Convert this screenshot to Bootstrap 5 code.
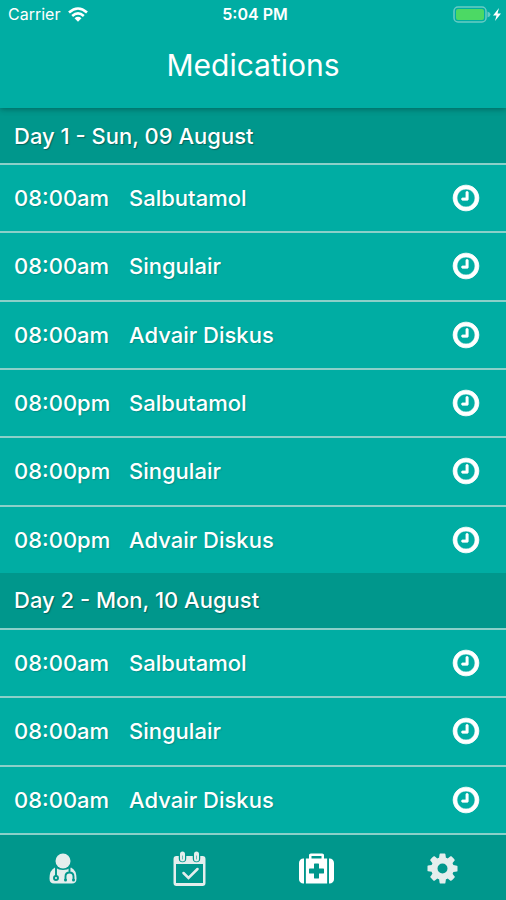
<!DOCTYPE html>
<html lang="en">
<head>
<meta charset="utf-8">
<meta name="viewport" content="width=device-width, initial-scale=1">
<title>Medications</title>
<link href="https://cdn.jsdelivr.net/npm/bootstrap@5.3.0/dist/css/bootstrap.min.css" rel="stylesheet">
<style>
  body { background: #00ada3; color: #fff; font-family: Inter, Roboto, sans-serif; }
  svg { display: block; fill: currentColor; }
  .app-header { position: relative; z-index: 1; background: #00ada3; box-shadow: 0 1px 6px rgba(0, 40, 36, .45); }
  .status-bar { height: 28px; padding: 0 4px 0 8px; font-size: 16px; line-height: 20px; }
  .status-time { font-size: 16px; font-weight: 600; }
  .app-title { height: 80px; padding-bottom: 6px; font-size: 30px; line-height: 36px; font-weight: 400; }
  .day-heading { height: 55px; padding: 0 14px; background: #00978c; font-size: 22px; line-height: 28px; font-weight: 500; text-shadow: 1px 1px 1px rgba(0, 50, 46, .5); }
  .dose { flex: 1 0 68px; padding: 0 25px 0 14px; border-top: 2px solid #8bd0c9; font-size: 22px; line-height: 28px; font-weight: 500; text-shadow: 1px 1px 1px rgba(0, 80, 75, .3); }
  .dose-time { width: 115px; }
  .clock-icon { stroke: currentColor; stroke-width: 50px; }
  .tab-bar { background: #00978c; border-top: 2px solid #8bd0c9; }
  .tab-link { height: 65px; padding-top: 2px; color: #e4eeed; }
  .tab-link.active { color: #fff; }
</style>
</head>
<body>
<svg class="d-none" aria-hidden="true">
  <symbol id="clock" viewBox="0 0 1792 1792"><path d="M1024 544v448q0 14-9 23t-23 9h-320q-14 0-23-9t-9-23v-64q0-14 9-23t23-9h224v-352q0-14 9-23t23-9h64q14 0 23 9t9 23zm416 352q0-148-73-273t-198-198-273-73-273 73-198 198-73 273 73 273 198 198 273 73 273-73 198-198 73-273zm224 0q0 209-103 385.500t-279.500 279.500-385.500 103-385.500-103-279.500-279.500-103-385.500 103-385.500 279.500-279.500 385.500-103 385.500 103 279.500 279.500 103 385.500z"/></symbol>
</svg>
<div class="d-flex flex-column min-vh-100">
  <header class="app-header">
    <div class="status-bar row g-0 align-items-center">
      <div class="col d-flex align-items-center gap-2">
        <span>Carrier</span>
        <svg width="20" height="15" viewBox="0 0 20 15" role="img" aria-label="Wi-Fi"><g fill="none" stroke="currentColor" stroke-width="2.600"><path d="M1 5.500Q10-2.500 19 5.500"/><path d="M4.200 9Q10 3.800 15.800 9"/></g><path d="M6.500 11.200Q10 8.300 13.500 11.200L10 14.800z"/></svg>
      </div>
      <div class="col-auto status-time">5:04 PM</div>
      <div class="col d-flex justify-content-end">
        <svg width="49" height="17" viewBox="0 0 49 17" role="img" aria-label="Battery charging"><rect x="1" y="1" width="32" height="15" rx="4" fill="none" stroke="#68cbc5" stroke-width="1.500"/><rect x="3" y="3" width="28" height="11" rx="2" fill="#4cd964"/><path d="M34.500 5.500q3 1 3 3t-3 3z" fill="#68cbc5"/><path d="M46 2l-6 7.500h3.500L42 15l6-7.500h-3.500z"/></svg>
      </div>
    </div>
    <h1 class="app-title d-flex align-items-center justify-content-center mb-0">Medications</h1>
  </header>
  <main class="d-flex flex-column flex-fill">
    <h2 class="day-heading d-flex align-items-center mb-0">Day 1 - Sun, 09 August</h2>
    <div class="dose d-flex align-items-center"><span class="dose-time">08:00am</span><span class="flex-fill">Salbutamol</span><button class="btn p-0 border-0 text-white" aria-label="Set reminder"><svg class="clock-icon" width="30" height="30"><use href="#clock"/></svg></button></div>
    <div class="dose d-flex align-items-center"><span class="dose-time">08:00am</span><span class="flex-fill">Singulair</span><button class="btn p-0 border-0 text-white" aria-label="Set reminder"><svg class="clock-icon" width="30" height="30"><use href="#clock"/></svg></button></div>
    <div class="dose d-flex align-items-center"><span class="dose-time">08:00am</span><span class="flex-fill">Advair Diskus</span><button class="btn p-0 border-0 text-white" aria-label="Set reminder"><svg class="clock-icon" width="30" height="30"><use href="#clock"/></svg></button></div>
    <div class="dose d-flex align-items-center"><span class="dose-time">08:00pm</span><span class="flex-fill">Salbutamol</span><button class="btn p-0 border-0 text-white" aria-label="Set reminder"><svg class="clock-icon" width="30" height="30"><use href="#clock"/></svg></button></div>
    <div class="dose d-flex align-items-center"><span class="dose-time">08:00pm</span><span class="flex-fill">Singulair</span><button class="btn p-0 border-0 text-white" aria-label="Set reminder"><svg class="clock-icon" width="30" height="30"><use href="#clock"/></svg></button></div>
    <div class="dose d-flex align-items-center"><span class="dose-time">08:00pm</span><span class="flex-fill">Advair Diskus</span><button class="btn p-0 border-0 text-white" aria-label="Set reminder"><svg class="clock-icon" width="30" height="30"><use href="#clock"/></svg></button></div>
    <h2 class="day-heading d-flex align-items-center mb-0">Day 2 - Mon, 10 August</h2>
    <div class="dose d-flex align-items-center"><span class="dose-time">08:00am</span><span class="flex-fill">Salbutamol</span><button class="btn p-0 border-0 text-white" aria-label="Set reminder"><svg class="clock-icon" width="30" height="30"><use href="#clock"/></svg></button></div>
    <div class="dose d-flex align-items-center"><span class="dose-time">08:00am</span><span class="flex-fill">Singulair</span><button class="btn p-0 border-0 text-white" aria-label="Set reminder"><svg class="clock-icon" width="30" height="30"><use href="#clock"/></svg></button></div>
    <div class="dose d-flex align-items-center"><span class="dose-time">08:00am</span><span class="flex-fill">Advair Diskus</span><button class="btn p-0 border-0 text-white" aria-label="Set reminder"><svg class="clock-icon" width="30" height="30"><use href="#clock"/></svg></button></div>
  </main>
  <nav class="tab-bar row g-0" aria-label="Main">
    <a class="tab-link col d-flex align-items-center justify-content-center" href="#doctor" aria-label="Doctor">
      <svg width="28" height="31" viewBox="0 0 28 31"><circle cx="14" cy="8" r="7.500"/><path d="M6 14.500Q14 19.500 22 14.500Q27.500 17 27.500 25.500Q27.500 30.500 23 30.500H5Q.5 30.500 .5 25.500Q.5 17 6 14.500z"/><g fill="none" stroke="#00978c" stroke-width="1.900"><path d="M7 14v9"/><circle cx="7" cy="25" r="2"/><path d="M20.500 14v5M16.500 27v-3.500q0-4 4-4t4 4V27"/></g><circle cx="16.500" cy="27" r="1.500" fill="#00978c"/><circle cx="24.500" cy="27" r="1.500" fill="#00978c"/></svg>
    </a>
    <a class="tab-link col d-flex align-items-center justify-content-center" href="#calendar" aria-label="Calendar">
      <svg width="33" height="36" viewBox="0 0 32 36"><path fill-rule="evenodd" d="M3 5H29Q32 5 32 8V32Q32 35 29 35H3Q0 35 0 32V8Q0 5 3 5zM2.500 13V32H29.500V13z"/><g fill="none" stroke-linecap="round"><path d="M9 4v3.500M23 4v3.500" stroke="#00978c" stroke-width="7.500"/><path d="M9 3v5M23 3v5" stroke="currentColor" stroke-width="5"/><path d="M9 5v3M23 5v3" stroke="#69bbb4" stroke-width="1"/><path d="M10 22l5 5 9-9" stroke="currentColor" stroke-width="2.500"/></g></svg>
    </a>
    <a class="tab-link active col d-flex align-items-center justify-content-center" href="#medications" aria-label="Medications" aria-current="page">
      <svg width="35" height="35" viewBox="0 0 1792 1792"><path d="M1280 1120v-192q0-14-9-23t-23-9h-224v-224q0-14-9-23t-23-9h-192q-14 0-23 9t-9 23v224h-224q-14 0-23 9t-9 23v192q0 14 9 23t23 9h224v224q0 14 9 23t23 9h192q14 0 23-9t9-23v-224h224q14 0 23-9t9-23zm-640-736h512v-128h-512v128zm-384 0v1280h-32q-92 0-158-66t-66-158v-832q0-92 66-158t158-66h32zm1184 0v1280h-1088v-1280h160v-160q0-40 28-68t68-28h576q40 0 68 28t28 68v160h160zm352 224v832q0 92-66 158t-158 66h-32v-1280h32q92 0 158 66t66 158z"/></svg>
    </a>
    <a class="tab-link col d-flex align-items-center justify-content-center" href="#settings" aria-label="Settings">
      <svg width="35" height="35" viewBox="0 0 1792 1792"><path d="M1152 896q0-106-75-181t-181-75-181 75-75 181 75 181 181 75 181-75 75-181zm512-109v222q0 12-8 23t-20 13l-185 28q-19 54-39 91 35 50 107 138 10 12 10 25t-9 23q-27 37-99 108t-94 71q-12 0-26-9l-138-108q-44 23-91 38-16 136-29 186-7 28-36 28h-222q-14 0-24.500-8.500t-11.500-21.500l-28-184q-49-16-90-37l-141 107q-10 9-25 9-14 0-25-11-126-114-165-168-7-10-7-23 0-12 8-23 15-21 51-66.500t54-70.500q-27-50-41-99l-183-27q-13-2-21-12.500t-8-23.500v-222q0-12 8-23t19-13l186-28q14-46 39-92-40-57-107-138-10-12-10-24 0-10 9-23 26-36 98.500-107.500t94.500-71.500q13 0 26 10l138 107q44-23 91-38 16-136 29-186 7-28 36-28h222q14 0 24.500 8.500t11.500 21.500l28 184q49 16 90 37l142-107q9-9 24-9 13 0 25 10 129 119 165 170 7 8 7 22 0 12-8 23-15 21-51 66.500t-54 70.500q26 50 41 98l183 28q13 2 21 12.500t8 23.500z"/></svg>
    </a>
  </nav>
</div>
<script src="https://cdn.jsdelivr.net/npm/bootstrap@5.3.0/dist/js/bootstrap.bundle.min.js"></script>
</body>
</html>
